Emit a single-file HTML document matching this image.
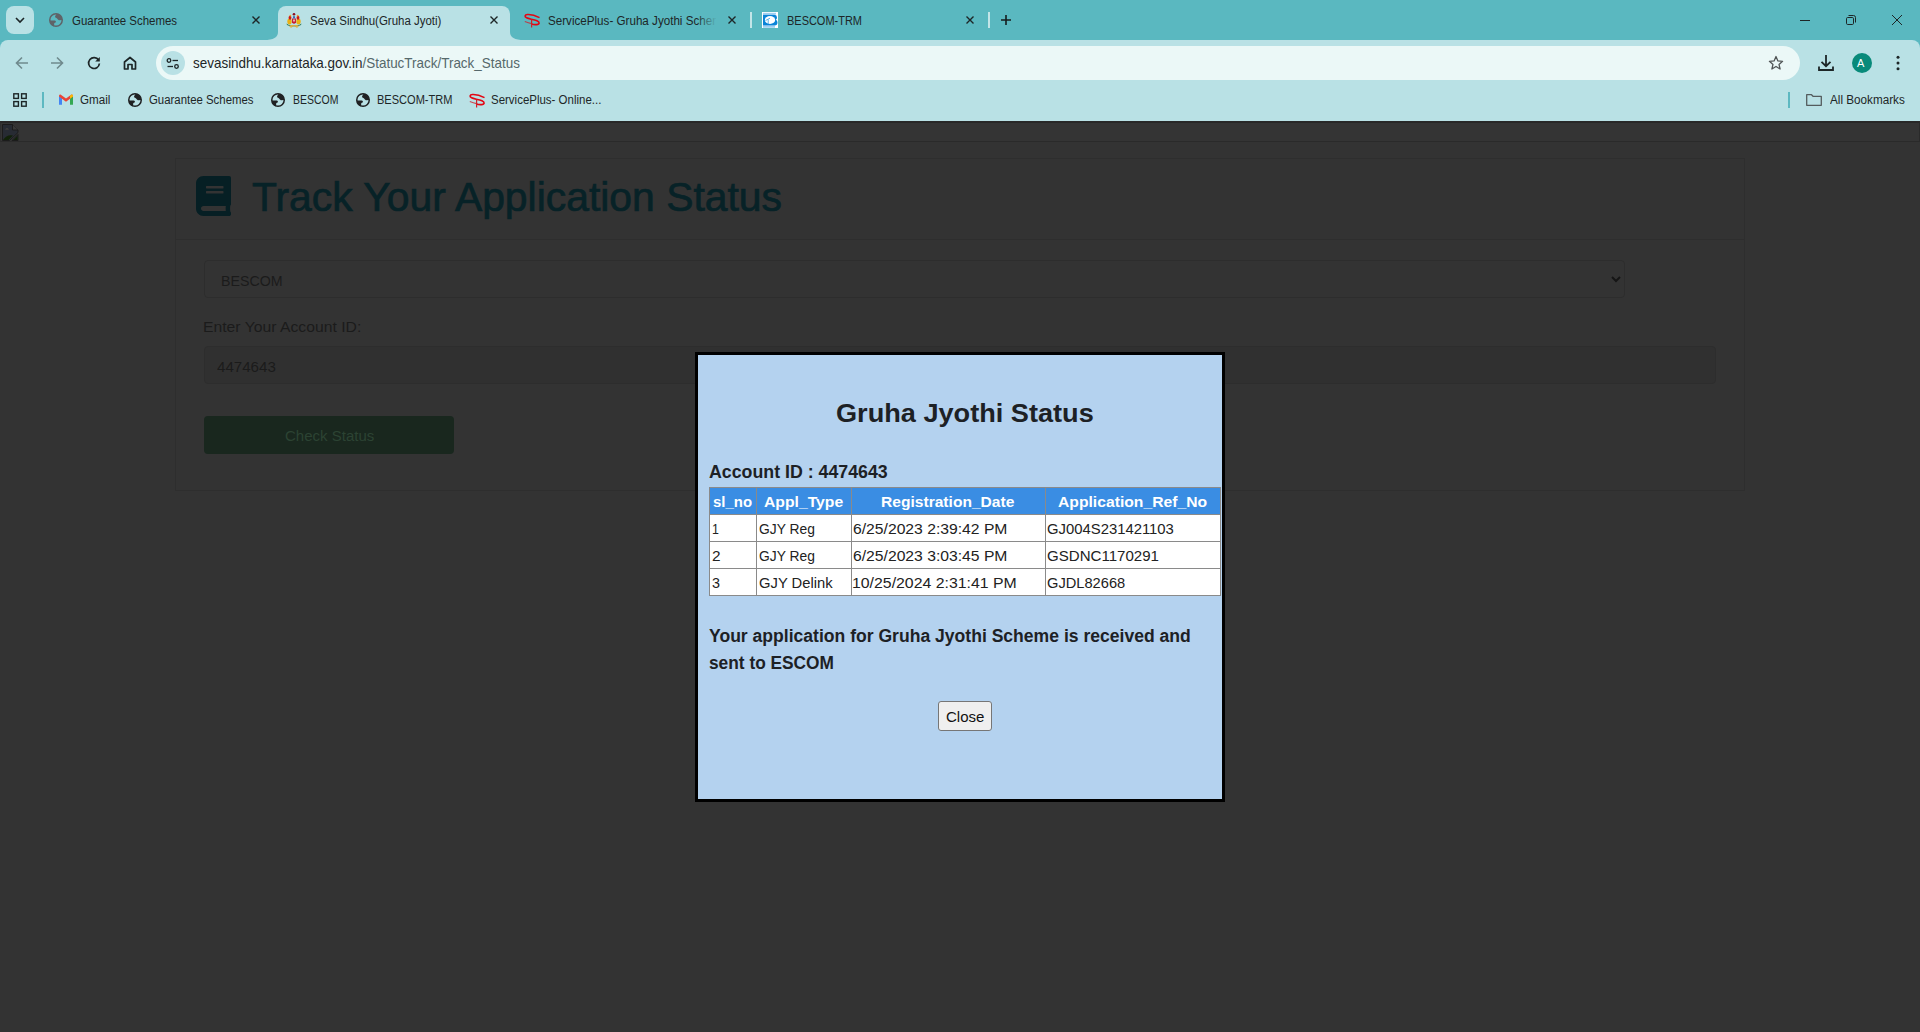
<!DOCTYPE html>
<html><head><meta charset="utf-8">
<style>
*{box-sizing:border-box;margin:0;padding:0}
html,body{width:1920px;height:1032px;overflow:hidden;background:#333333;font-family:"Liberation Sans",sans-serif}
.a{position:absolute}
.t{position:absolute;white-space:nowrap;transform-origin:0 0;line-height:1}
svg{position:absolute;overflow:visible}
#tabbar{left:0;top:0;width:1920px;height:50px;background:#5ab8c0}
#toolbar{left:0;top:40px;width:1920px;height:81px;background:#b9e1e5;border-radius:8px 8px 0 0}
#page{left:0;top:121px;width:1920px;height:911px;background:#333333}
.tab{color:#1d2627}
.bm{color:#1d2627}
.dk{color:#1b1b1b}
.th{font-weight:bold;color:#fff}
.td{color:#222}
.msg{font-weight:bold;color:#1d2125}
.url{color:#1d2627}
.ttl{color:#072227;-webkit-text-stroke:0.7px #072227}
.chk{color:#2c4333}
.cls{color:#111}
</style></head>
<body>
<div id="tabbar" class="a"></div>
<div id="toolbar" class="a"></div>
<div id="page" class="a"></div>

<!-- ===== TAB STRIP ===== -->
<div class="a" style="left:6px;top:6px;width:28px;height:28px;border-radius:8px;background:#b9e1e5"></div>
<svg style="left:0;top:0" width="40" height="40"><path d="M16 18 L20 22 L24 18" fill="none" stroke="#1d2627" stroke-width="1.6"/></svg>

<!-- tab1 -->
<svg style="left:49px;top:13px" width="14" height="14" viewBox="0 0 14 14"><circle cx="7" cy="7" r="6.25" fill="none" stroke="#5f6368" stroke-width="1.5"/><path d="M7.9 0.8 C6.8 1.6 5.9 3.2 6.1 4.3 L7.4 5 C8.4 5.5 9 6.9 9.9 7.3 L13.2 7.1 A6.25 6.25 0 0 0 7.9 0.8 Z" fill="#5f6368"/><path d="M0.8 7.4 L5.6 7.5 C6.9 7.6 7.3 8.7 6.6 9.4 L5.3 10.1 L5 13.3 A6.25 6.25 0 0 1 0.8 7.4 Z" fill="#5f6368"/></svg>
<div class="t tab" id="tab1" style="left:72.00px;top:15.00px;font-size:12.00px;transform:scaleX(0.9549)">Guarantee Schemes</div>
<svg style="left:252px;top:16px" width="8" height="8"><path d="M0.5 0.5 L7.5 7.5 M7.5 0.5 L0.5 7.5" stroke="#1d2627" stroke-width="1.4"/></svg>

<!-- tab2 active -->
<div class="a" style="left:278px;top:6px;width:232px;height:35px;background:#b9e1e5;border-radius:8px 8px 0 0"></div>
<svg style="left:264px;top:32px" width="260" height="9"><path d="M0 8 Q14 8 14 0 L14 8 Z" fill="#b9e1e5"/><path d="M246 0 Q246 8 260 8 L246 8 Z" fill="#b9e1e5"/></svg>
<svg style="left:286px;top:12px" width="16" height="16" viewBox="0 0 16 16"><path d="M0.5 11.5 Q4 14.5 8 13.2 Q12 14.5 15.5 11.5 L15 13 Q12 15 8 14.3 Q4 15 1 13 Z" fill="#2c7a5a"/><path d="M3 14 L5 16 L7 14.5 L9 14.5 L11 16 L13 14 L11 13 L5 13 Z" fill="#e0b040" opacity=".9"/><ellipse cx="3.5" cy="9.5" rx="2.2" ry="3" fill="#eab012"/><ellipse cx="12.5" cy="9.5" rx="2.2" ry="3" fill="#eab012"/><ellipse cx="4" cy="5.7" rx="1.4" ry="2" fill="#cc1818"/><ellipse cx="12" cy="5.7" rx="1.4" ry="2" fill="#cc1818"/><circle cx="4.3" cy="3.6" r="0.9" fill="#f0a020"/><circle cx="11.7" cy="3.6" r="0.9" fill="#f0a020"/><path d="M6 6.5 L10 6.5 L10 10.5 Q8 13 6 10.5 Z" fill="#c81e35"/><rect x="7.2" y="7.5" width="1.6" height="2" fill="#e8d0d8"/><rect x="7" y="4.2" width="2" height="2.2" fill="#3a6cb4"/><circle cx="8" cy="2.3" r="1.3" fill="#8c1020"/></svg>
<div class="t tab" id="tab2" style="left:310.00px;top:15.00px;font-size:12.00px;transform:scaleX(0.9564)">Seva Sindhu(Gruha Jyoti)</div>
<svg style="left:490px;top:16px" width="8" height="8"><path d="M0.5 0.5 L7.5 7.5 M7.5 0.5 L0.5 7.5" stroke="#1d2627" stroke-width="1.4"/></svg>

<!-- tab3 -->
<svg style="left:524px;top:13px" width="16" height="15" viewBox="0 0 16 15"><path d="M15.5 4.6 C12 2.8 7 1.3 3.5 1.5 C0.6 1.8 0.3 3.6 2.6 4.8 C5 6 9.5 6.3 13 7.8 C16 9.3 15.8 11.4 12.5 11.6 C10.5 11.7 8.8 11.5 7.6 11" fill="none" stroke="#e30613" stroke-width="1.6"/><path d="M0.8 8.5 C3 9.4 5.5 10.2 7.6 10.6" fill="none" stroke="#d0202a" stroke-width="1.1" opacity=".8"/><path d="M7.6 6.6 L7.6 14.5" stroke="#d0202a" stroke-width="1.2"/></svg>
<div class="a" style="left:0;top:0;width:716px;height:40px;overflow:hidden"><div class="t tab" id="tab3" style="left:548.00px;top:15.00px;font-size:12.00px;transform:scaleX(0.9692)">ServicePlus- Gruha Jyothi Schem</div></div><div class="a" style="left:696px;top:8px;width:21px;height:24px;background:linear-gradient(90deg,rgba(90,184,192,0),#5ab8c0)"></div>
<svg style="left:728px;top:16px" width="8" height="8"><path d="M0.5 0.5 L7.5 7.5 M7.5 0.5 L0.5 7.5" stroke="#1d2627" stroke-width="1.4"/></svg>
<div class="a" style="left:750px;top:12px;width:2px;height:16px;background:#c3e5e8"></div>

<!-- tab4 -->
<svg style="left:762px;top:12px" width="16" height="16" viewBox="0 0 16 16"><rect width="16" height="16" fill="#fff"/><rect x="1" y="0.8" width="13" height="1.8" fill="#9fd0f0"/><rect x="1" y="13.8" width="12" height="2" fill="#9fd0f0"/><path d="M1 2.8 L12.5 2.8 Q15 3 15 5.5 Q15 7.2 13.8 7.8 Q15.5 8.6 15.5 10.5 Q15.5 13.3 12.5 13.5 L1 13.5 Z" fill="#0a84d8"/><ellipse cx="8" cy="8" rx="5.2" ry="3.9" fill="#fff"/><path d="M3.5 8.5 L8 6.2 M6.2 7.5 L6.2 12" stroke="#5ab0e8" stroke-width="1"/></svg>
<div class="t tab" id="tab4" style="left:786.50px;top:15.00px;font-size:12.00px;transform:scaleX(0.9142)">BESCOM-TRM</div>
<svg style="left:966px;top:16px" width="8" height="8"><path d="M0.5 0.5 L7.5 7.5 M7.5 0.5 L0.5 7.5" stroke="#1d2627" stroke-width="1.4"/></svg>
<div class="a" style="left:988px;top:12px;width:2px;height:16px;background:#c3e5e8"></div>
<svg style="left:1001px;top:15px" width="10" height="10"><path d="M5 0 L5 10 M0 5 L10 5" stroke="#161c1d" stroke-width="1.6"/></svg>

<!-- window controls -->
<svg style="left:1800px;top:20px" width="10" height="2"><path d="M0 0.5 L10 0.5" stroke="#1d2627" stroke-width="1"/></svg>
<svg style="left:1846px;top:15px" width="10" height="10"><rect x="0.5" y="2.5" width="7" height="7" rx="1.2" fill="none" stroke="#1d2627" stroke-width="1"/><path d="M2.5 0.5 L7.5 0.5 Q9.5 0.5 9.5 2.5 L9.5 7.5" fill="none" stroke="#1d2627" stroke-width="1"/></svg>
<svg style="left:1892px;top:15px" width="10" height="10"><path d="M0 0 L10 10 M10 0 L0 10" stroke="#1d2627" stroke-width="1"/></svg>

<!-- ===== TOOLBAR ===== -->
<svg style="left:15px;top:56px" width="14" height="14"><path d="M13 7 L1.5 7 M7 1.5 L1.5 7 L7 12.5" fill="none" stroke="#6f8a8d" stroke-width="1.6"/></svg>
<svg style="left:50px;top:56px" width="14" height="14"><path d="M1 7 L12.5 7 M7 1.5 L12.5 7 L7 12.5" fill="none" stroke="#6f8a8d" stroke-width="1.6"/></svg>
<svg style="left:87px;top:56px" width="14" height="14"><path d="M11.6 4.2 A5.4 5.4 0 1 0 12.4 7.5" fill="none" stroke="#1d2627" stroke-width="1.7"/><path d="M12.8 1 L12.8 5.6 L8.2 5.6 Z" fill="#1d2627"/></svg>
<svg style="left:123px;top:56px" width="14" height="14"><path d="M1.5 13 L1.5 6 L7 1.5 L12.5 6 L12.5 13 L9 13 L9 8.5 L5 8.5 L5 13 Z" fill="none" stroke="#1d2627" stroke-width="1.7" stroke-linejoin="round"/></svg>

<div class="a" style="left:156px;top:46px;width:1644px;height:34px;border-radius:17px;background:#ebf8f7"></div>
<div class="a" style="left:161px;top:51px;width:24px;height:24px;border-radius:12px;background:#b9e1e5"></div>
<svg style="left:166px;top:56.7px" width="14" height="14"><circle cx="3" cy="3.5" r="1.8" fill="none" stroke="#1d2627" stroke-width="1.3"/><path d="M6.5 3.5 L12 3.5" stroke="#1d2627" stroke-width="1.3"/><circle cx="10.5" cy="9.5" r="1.8" fill="none" stroke="#1d2627" stroke-width="1.3"/><path d="M1.5 9.5 L7 9.5" stroke="#1d2627" stroke-width="1.3"/></svg>
<div class="t url" id="url" style="left:192.79px;top:56.00px;font-size:14.50px;transform:scaleX(0.9275)">sevasindhu.karnataka.gov.in<span style="color:#56686b">/StatucTrack/Track_Status</span></div>

<svg style="left:1768px;top:55px" width="16" height="16" viewBox="0 0 16 16"><path d="M8 1.5 L9.9 5.9 L14.6 6.3 L11 9.4 L12.1 14 L8 11.5 L3.9 14 L5 9.4 L1.4 6.3 L6.1 5.9 Z" fill="none" stroke="#505556" stroke-width="1.3" stroke-linejoin="round"/></svg>
<svg style="left:1817px;top:55px" width="18" height="17"><path d="M9 0 L9 11 M4.5 6.8 L9 11.2 L13.5 6.8" fill="none" stroke="#1d2627" stroke-width="1.8"/><path d="M2 11.5 L2 15 L16 15 L16 11.5" fill="none" stroke="#1d2627" stroke-width="1.8"/></svg>
<div class="a" style="left:1852px;top:53px;width:20px;height:20px;border-radius:10px;background:#088a7a"></div>
<div class="t" style="left:1857px;top:58px;font-size:11px;color:#fff">A</div>
<svg style="left:1896px;top:55px" width="4" height="16"><circle cx="2" cy="2.3" r="1.5" fill="#1d2627"/><circle cx="2" cy="8" r="1.5" fill="#1d2627"/><circle cx="2" cy="13.7" r="1.5" fill="#1d2627"/></svg>

<!-- ===== BOOKMARKS ===== -->
<svg style="left:13px;top:93px" width="14" height="14"><rect x="0.8" y="0.8" width="4.6" height="4.6" fill="none" stroke="#1d2627" stroke-width="1.4"/><rect x="8.6" y="0.8" width="4.6" height="4.6" fill="none" stroke="#1d2627" stroke-width="1.4"/><rect x="0.8" y="8.6" width="4.6" height="4.6" fill="none" stroke="#1d2627" stroke-width="1.4"/><rect x="8.6" y="8.6" width="4.6" height="4.6" fill="none" stroke="#1d2627" stroke-width="1.4"/></svg>
<div class="a" style="left:42px;top:92px;width:2px;height:16px;background:#5db8c1"></div>
<svg style="left:59px;top:94px" width="14" height="11" viewBox="0 0 14 11"><path d="M0 2 L0 10.8 L3 10.8 L3 4.2 Z" fill="#4285f4"/><path d="M11 4.2 L11 10.8 L14 10.8 L14 2 Z" fill="#34a853"/><path d="M0 2 Q0 0 1.5 0.5 L7 4.6 L12.5 0.5 Q14 0 14 2 L14 2.5 L7 7.8 L0 2.5 Z" fill="#ea4335"/><path d="M11 1.8 L12.5 0.5 Q14 0 14 2 L14 2.5 L11 4.8 Z" fill="#fbbc04"/></svg>
<div class="t bm" id="bm1" style="left:80.00px;top:94.40px;font-size:12.00px;transform:scaleX(0.9677)">Gmail</div>
<svg style="left:128px;top:93px" width="14" height="14" viewBox="0 0 14 14"><circle cx="7" cy="7" r="6.25" fill="none" stroke="#1f2123" stroke-width="1.5"/><path d="M7.9 0.8 C6.8 1.6 5.9 3.2 6.1 4.3 L7.4 5 C8.4 5.5 9 6.9 9.9 7.3 L13.2 7.1 A6.25 6.25 0 0 0 7.9 0.8 Z" fill="#1f2123"/><path d="M0.8 7.4 L5.6 7.5 C6.9 7.6 7.3 8.7 6.6 9.4 L5.3 10.1 L5 13.3 A6.25 6.25 0 0 1 0.8 7.4 Z" fill="#1f2123"/></svg>
<div class="t bm" id="bm2" style="left:149.00px;top:94.40px;font-size:12.00px;transform:scaleX(0.9493)">Guarantee Schemes</div>
<svg style="left:271px;top:93px" width="14" height="14" viewBox="0 0 14 14"><circle cx="7" cy="7" r="6.25" fill="none" stroke="#1f2123" stroke-width="1.5"/><path d="M7.9 0.8 C6.8 1.6 5.9 3.2 6.1 4.3 L7.4 5 C8.4 5.5 9 6.9 9.9 7.3 L13.2 7.1 A6.25 6.25 0 0 0 7.9 0.8 Z" fill="#1f2123"/><path d="M0.8 7.4 L5.6 7.5 C6.9 7.6 7.3 8.7 6.6 9.4 L5.3 10.1 L5 13.3 A6.25 6.25 0 0 1 0.8 7.4 Z" fill="#1f2123"/></svg>
<div class="t bm" id="bm3" style="left:292.67px;top:94.40px;font-size:12.00px;transform:scaleX(0.8720)">BESCOM</div>
<svg style="left:356px;top:93px" width="14" height="14" viewBox="0 0 14 14"><circle cx="7" cy="7" r="6.25" fill="none" stroke="#1f2123" stroke-width="1.5"/><path d="M7.9 0.8 C6.8 1.6 5.9 3.2 6.1 4.3 L7.4 5 C8.4 5.5 9 6.9 9.9 7.3 L13.2 7.1 A6.25 6.25 0 0 0 7.9 0.8 Z" fill="#1f2123"/><path d="M0.8 7.4 L5.6 7.5 C6.9 7.6 7.3 8.7 6.6 9.4 L5.3 10.1 L5 13.3 A6.25 6.25 0 0 1 0.8 7.4 Z" fill="#1f2123"/></svg>
<div class="t bm" id="bm4" style="left:377.00px;top:94.40px;font-size:12.00px;transform:scaleX(0.9199)">BESCOM-TRM</div>
<svg style="left:469px;top:93px" width="16" height="15" viewBox="0 0 16 15"><path d="M15.5 4.6 C12 2.8 7 1.3 3.5 1.5 C0.6 1.8 0.3 3.6 2.6 4.8 C5 6 9.5 6.3 13 7.8 C16 9.3 15.8 11.4 12.5 11.6 C10.5 11.7 8.8 11.5 7.6 11" fill="none" stroke="#e30613" stroke-width="1.6"/><path d="M0.8 8.5 C3 9.4 5.5 10.2 7.6 10.6" fill="none" stroke="#d0202a" stroke-width="1.1" opacity=".8"/><path d="M7.6 6.6 L7.6 14.5" stroke="#d0202a" stroke-width="1.2"/></svg>
<div class="t bm" id="bm5" style="left:491.00px;top:94.40px;font-size:12.00px;transform:scaleX(0.9565)">ServicePlus- Online...</div>

<div class="a" style="left:1788px;top:92px;width:2px;height:16px;background:#5db8c1"></div>
<svg style="left:1806px;top:94px" width="16" height="12"><path d="M0.7 0.7 L5.5 0.7 L7 2.3 L15.3 2.3 L15.3 11.3 L0.7 11.3 Z" fill="none" stroke="#545c5e" stroke-width="1.3" stroke-linejoin="round"/></svg>
<div class="t bm" id="bm6" style="left:1830.45px;top:94.40px;font-size:12.00px;transform:scaleX(0.9746)">All Bookmarks</div>

<!-- ===== PAGE ===== -->
<div class="a" style="left:0;top:121px;width:1920px;height:21px;background:#343434;border-top:2px solid #282828;border-right:1px solid #2a2a2a;border-bottom:1px solid #2a2a2a;border-left:1px solid #2e2e2e"></div>
<svg style="left:2px;top:124px" width="17" height="17" viewBox="0 0 17 17"><path d="M0.5 0.5 L10.5 0.5 L16 6 L16 8.5 L7.5 16.5 L0.5 16.5 Z" fill="#272b33" stroke="#1c1c1c" stroke-width="1"/><path d="M16 10.5 L16 16.5 L10 16.5 Z" fill="#272b33" stroke="#1c1c1c" stroke-width="1"/><path d="M10.5 0.5 L10.5 6 L16 6" fill="#3a3a3a" stroke="#1c1c1c" stroke-width="1"/><path d="M3 5.5 Q5 3 7 5.5 Z" fill="#4a4640"/><path d="M1 16 Q5 10 11 11.5 L6.5 16 Z" fill="#112208"/><path d="M11.5 16 L15.5 12 L15.5 16 Z" fill="#112208"/></svg>

<div class="a" style="left:175px;top:158px;width:1570px;height:333px;border:1px solid #2e2e2e"></div>
<div class="a" style="left:176px;top:239px;width:1568px;height:1px;background:#2e2e2e"></div>
<svg style="left:196px;top:176px" width="35" height="40" viewBox="0 0 448 512" preserveAspectRatio="none"><path fill="#061f24" d="M448 360V24c0-13.3-10.7-24-24-24H96C43 0 0 43 0 96v320c0 53 43 96 96 96h328c13.3 0 24-10.7 24-24v-16c0-7.5-3.5-14.3-8.9-18.7-4.2-15.4-4.2-59.3 0-74.7 5.4-4.3 8.9-11.1 8.9-18.6zM128 134c0-3.3 2.7-6 6-6h212c3.3 0 6 2.7 6 6v20c0 3.3-2.7 6-6 6H134c-3.3 0-6-2.7-6-6v-20zm0 64c0-3.3 2.7-6 6-6h212c3.3 0 6 2.7 6 6v20c0 3.3-2.7 6-6 6H134c-3.3 0-6-2.7-6-6v-20zm253.4 250H96c-17.7 0-32-14.3-32-32 0-17.6 14.4-32 32-32h285.4c-1.9 17.1-1.9 46.9 0 64z"/></svg>
<div class="t ttl" id="title" style="left:252.19px;top:177.01px;font-size:40.58px;transform:scaleX(1.0069)">Track Your Application Status</div>

<div class="a" style="left:204px;top:260px;width:1421px;height:38px;border:1px solid #2d2d2d;border-radius:4px"></div>
<div class="t dk" id="bescom" style="left:220.61px;top:273.31px;font-size:15.50px;transform:scaleX(0.9164)">BESCOM</div>
<svg style="left:1611px;top:276px" width="10" height="6"><path d="M1 1 L5 5 L9 1" fill="none" stroke="#151515" stroke-width="2"/></svg>
<div class="t dk" id="lbl" style="left:203.46px;top:319.11px;font-size:15.50px;transform:scaleX(1.0151)">Enter Your Account ID:</div>
<div class="a" style="left:204px;top:346px;width:1512px;height:38px;border:1px solid #2d2d2d;border-radius:4px;background:#303030"></div>
<div class="t dk" id="acc" style="left:216.98px;top:359.01px;font-size:15.50px;transform:scaleX(0.9751)">4474643</div>
<div class="a" style="left:204px;top:416px;width:250px;height:38px;border-radius:4px;background:#19271e"></div>
<div class="t chk" id="chk" style="left:284.50px;top:427.91px;font-size:15.50px;transform:scaleX(0.9689)">Check Status</div>

<!-- ===== MODAL ===== -->
<div class="a" style="left:695px;top:352px;width:530px;height:450px;border:3px solid #000;background:#b4d2ef"></div>
<div class="t msg" id="mtitle" style="left:835.98px;top:399.71px;font-size:26.20px;transform:scaleX(1.0360)">Gruha Jyothi Status</div>
<div class="t msg" id="maccid" style="left:709.30px;top:464.00px;font-size:17.60px;transform:scaleX(1.0095)">Account ID : 4474643</div>


<div class="a" style="left:709px;top:487px;width:512px;height:109px;background:#fff;border:1px solid #8a8a8a"></div>
<div class="a" style="left:710px;top:488px;width:510px;height:26px;background:#3a8de3"></div>
<div class="a" style="left:710px;top:514px;width:510px;height:1px;background:#8a8a8a"></div>
<div class="a" style="left:710px;top:541px;width:510px;height:1px;background:#8a8a8a"></div>
<div class="a" style="left:710px;top:568px;width:510px;height:1px;background:#8a8a8a"></div>
<div class="a" style="left:756px;top:488px;width:1px;height:107px;background:#8a8a8a"></div>
<div class="a" style="left:851px;top:488px;width:1px;height:107px;background:#8a8a8a"></div>
<div class="a" style="left:1045px;top:488px;width:1px;height:107px;background:#8a8a8a"></div>
<div class="t th" id="th1" style="left:712.96px;top:493.60px;font-size:15.20px;transform:scaleX(0.9837)">sl_no</div>
<div class="t th" id="th2" style="left:763.95px;top:493.60px;font-size:15.20px;transform:scaleX(1.0350)">Appl_Type</div>
<div class="t th" id="th3" style="left:880.97px;top:493.60px;font-size:15.20px;transform:scaleX(1.0263)">Registration_Date</div>
<div class="t th" id="th4" style="left:1057.97px;top:493.60px;font-size:15.20px;transform:scaleX(1.0334)">Application_Ref_No</div>
<div class="t td" id="r1c1" style="left:711.70px;top:521.01px;font-size:15.20px;transform:scaleX(0.8150)">1</div>
<div class="t td" id="r1c2" style="left:759.00px;top:521.01px;font-size:15.20px;transform:scaleX(0.9109)">GJY Reg</div>
<div class="t td" id="r1c3" style="left:853.00px;top:521.01px;font-size:15.20px;transform:scaleX(1.0333)">6/25/2023 2:39:42 PM</div>
<div class="t td" id="r1c4" style="left:1047.00px;top:521.01px;font-size:15.20px;transform:scaleX(0.9776)">GJ004S231421103</div>
<div class="t td" id="r2c1" style="left:711.72px;top:548.00px;font-size:15.20px;transform:scaleX(1.0147)">2</div>
<div class="t td" id="r2c2" style="left:759.00px;top:548.00px;font-size:15.20px;transform:scaleX(0.9109)">GJY Reg</div>
<div class="t td" id="r2c3" style="left:853.00px;top:548.00px;font-size:15.20px;transform:scaleX(1.0333)">6/25/2023 3:03:45 PM</div>
<div class="t td" id="r2c4" style="left:1047.00px;top:548.00px;font-size:15.20px;transform:scaleX(0.9916)">GSDNC1170291</div>
<div class="t td" id="r3c1" style="left:712.03px;top:574.60px;font-size:15.20px;transform:scaleX(0.9461)">3</div>
<div class="t td" id="r3c2" style="left:759.00px;top:574.60px;font-size:15.20px;transform:scaleX(0.9730)">GJY Delink</div>
<div class="t td" id="r3c3" style="left:851.97px;top:574.60px;font-size:15.20px;transform:scaleX(1.0431)">10/25/2024 2:31:41 PM</div>
<div class="t td" id="r3c4" style="left:1047.00px;top:574.60px;font-size:15.20px;transform:scaleX(0.9645)">GJDL82668</div>
<div class="t msg" id="msg1" style="left:709.00px;top:627.81px;font-size:17.60px;transform:scaleX(0.9982)">Your application for Gruha Jyothi Scheme is received and</div>
<div class="t msg" id="msg2" style="left:709.00px;top:654.82px;font-size:17.60px;transform:scaleX(0.9833)">sent to ESCOM</div>
<div class="a" style="left:938px;top:701px;width:54px;height:30px;background:#efefef;border:1px solid #767676;border-radius:3px"></div>
<div class="t cls" id="close" style="left:946.00px;top:709.01px;font-size:15.30px;transform:scaleX(0.9825)">Close</div>
</body></html>
